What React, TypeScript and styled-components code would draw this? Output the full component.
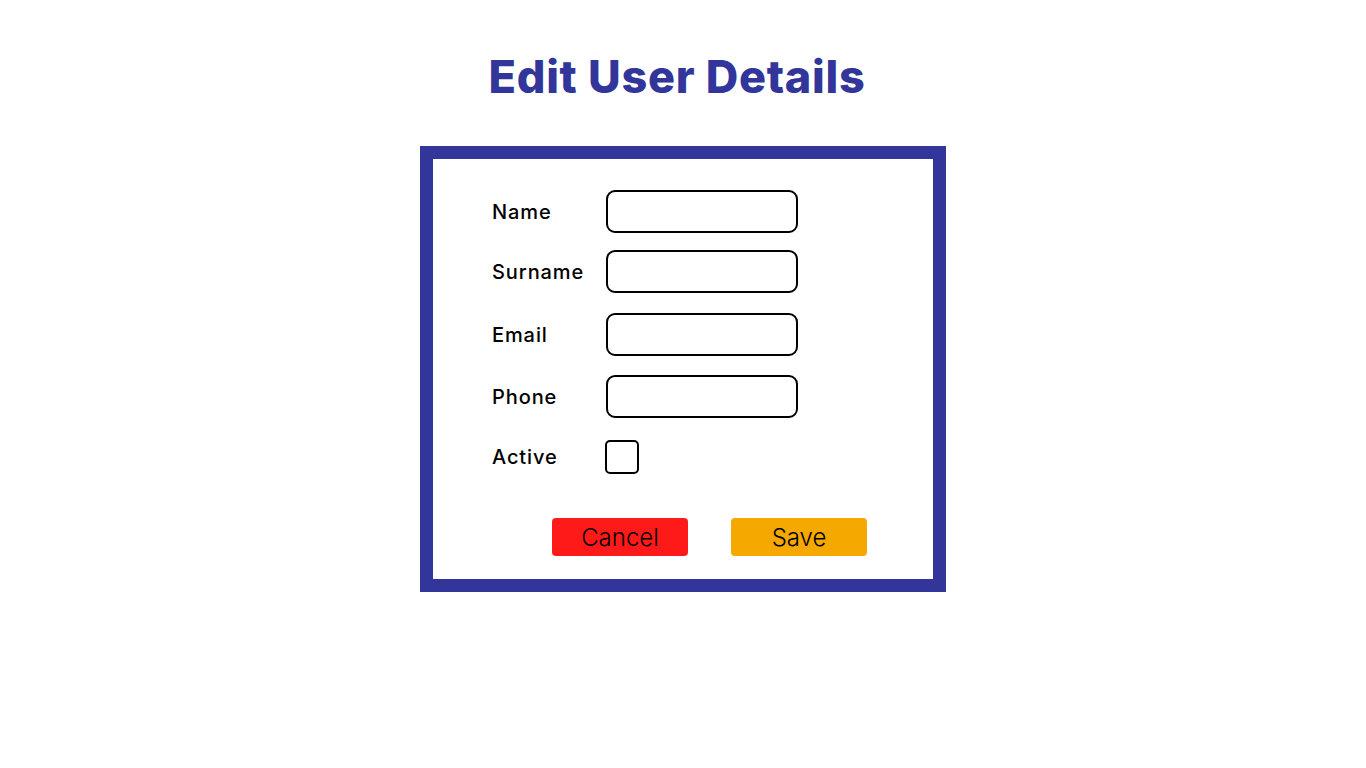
import React from "react";
import styled, { createGlobalStyle } from "styled-components";

const Global = createGlobalStyle`
  html, body { margin: 0; padding: 0; background: #ffffff; }
  body { font-family: Inter, "Noto Sans", sans-serif; }
`;

const Page = styled.main`
  width: 1366px;
  height: 768px;
  display: flex;
  flex-direction: column;
  align-items: center;
`;

const Title = styled.h1`
  margin: 54px 12px 0 0;
  font-family: Inter, sans-serif;
  font-weight: 800;
  font-size: 45px;
  line-height: 45px;
  letter-spacing: 0.7px;
  color: #32359a;
`;

const Frame = styled.form`
  margin-top: 47px;
  box-sizing: border-box;
  width: 526px;
  height: 446px;
  border: 13px solid #32359a;
  padding: 31px 0 0 59px;
  display: flex;
  flex-direction: column;
`;

const Fields = styled.div`
  display: flex;
  flex-direction: column;
`;

const Row = styled.label<{ $mt: number }>`
  display: grid;
  grid-template-columns: 114px auto;
  align-items: center;
  height: 43px;
  margin-top: ${(p) => p.$mt}px;
`;

const LabelText = styled.span`
  font-family: Inter, sans-serif;
  font-size: 20px;
  font-weight: 500;
  letter-spacing: 0.9px;
  color: #000;
`;

const Input = styled.input`
  box-sizing: border-box;
  width: 192px;
  height: 43px;
  border: 2px solid #000;
  border-radius: 9px;
  background: #fff;
  outline: none;
  padding: 0 10px;
  font-size: 18px;
`;

const Check = styled.input`
  appearance: none;
  -webkit-appearance: none;
  margin: 0 0 0 -1px;
  box-sizing: border-box;
  width: 34px;
  height: 34px;
  border: 2px solid #000;
  border-radius: 5px;
  background: #fff;
`;

const Actions = styled.div`
  display: flex;
  gap: 43px;
  margin: 40px 0 0 60px;
`;

const Button = styled.button<{ $bg: string }>`
  box-sizing: border-box;
  width: 136px;
  height: 38px;
  border: none;
  border-radius: 4px;
  background: ${(p) => p.$bg};
  color: #000;
  font-family: Inter, sans-serif;
  font-weight: 300;
  font-size: 24px;
  padding: 0;
  cursor: pointer;
`;

const fields = [
  { label: "Name", mt: 0 },
  { label: "Surname", mt: 17 },
  { label: "Email", mt: 20 },
  { label: "Phone", mt: 19 },
];

export default function App() {
  return (
    <>
      <Global />
      <Page>
        <Title>Edit User Details</Title>
        <Frame onSubmit={(e) => e.preventDefault()}>
          <Fields>
            {fields.map((f) => (
              <Row key={f.label} $mt={f.mt}>
                <LabelText>{f.label}</LabelText>
                <Input type="text" />
              </Row>
            ))}
            <Row $mt={17}>
              <LabelText>Active</LabelText>
              <Check type="checkbox" />
            </Row>
          </Fields>
          <Actions>
            <Button type="button" $bg="#ff1a1a">Cancel</Button>
            <Button type="submit" $bg="#f5a800">Save</Button>
          </Actions>
        </Frame>
      </Page>
    </>
  );
}
